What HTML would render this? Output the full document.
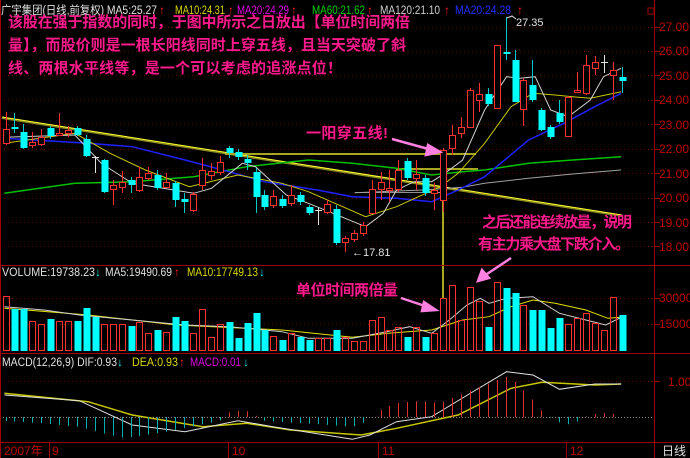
<!DOCTYPE html>
<html><head><meta charset="utf-8"><style>
html,body{margin:0;padding:0;background:#000;width:690px;height:458px;overflow:hidden}
svg{display:block}
text{font-family:"Liberation Sans","Noto Sans CJK SC",sans-serif}
.p{font-family:"Liberation Sans","WenQuanYi Zen Hei","Noto Sans CJK SC",sans-serif;fill:#ff1a8c;font-weight:bold}
</style></head><body>
<svg id="s" width="690" height="458" viewBox="0 0 690 458" xmlns="http://www.w3.org/2000/svg">
<rect width="690" height="458" fill="#000"/>
<g id="grid"></g>
<g id="lines"></g>
<g id="cand"></g>
<g id="over"></g>
<g stroke="#a00000" stroke-width="1" fill="none">
<line x1="0" y1="265.5" x2="690" y2="265.5"/>
<line x1="0" y1="353.5" x2="690" y2="353.5"/>
<line x1="0" y1="442.5" x2="690" y2="442.5"/>
<line x1="654.5" y1="0" x2="654.5" y2="458"/>
<line x1="0.5" y1="0" x2="0.5" y2="458"/>
<rect x="648" y="8" width="6" height="6" stroke="#a00000"/>
</g>
<g font-size="11.5" lengthAdjust="spacingAndGlyphs">
<text x="1" y="14" fill="#e0e0e0" textLength="156" lengthAdjust="spacingAndGlyphs">广宇集团(日线,前复权) MA5:25.27</text>
<text x="175" y="14" fill="#d8d800" textLength="50" lengthAdjust="spacingAndGlyphs">MA10:24.31</text>
<text x="237" y="14" fill="#e000e0" textLength="52" lengthAdjust="spacingAndGlyphs">MA20:24.29</text>
<text x="312" y="14" fill="#00d000" textLength="53" lengthAdjust="spacingAndGlyphs">MA60:21.62</text>
<text x="380" y="14" fill="#d0d0d0" textLength="60" lengthAdjust="spacingAndGlyphs">MA120:21.10</text>
<text x="455" y="14" fill="#2030ff" textLength="56" lengthAdjust="spacingAndGlyphs">MA20:24.28</text>
<text x="2" y="276" fill="#e0e0e0" textLength="93" lengthAdjust="spacingAndGlyphs">VOLUME:19738.23</text>
<text x="105" y="276" fill="#e0e0e0" textLength="67" lengthAdjust="spacingAndGlyphs">MA5:19490.69</text>
<text x="187" y="276" fill="#d8d800" textLength="71" lengthAdjust="spacingAndGlyphs">MA10:17749.13</text>
<text x="2" y="366" fill="#e0e0e0" textLength="115" lengthAdjust="spacingAndGlyphs">MACD(12,26,9) DIF:0.93</text>
<text x="132" y="366" fill="#d8d800" textLength="46" lengthAdjust="spacingAndGlyphs">DEA:0.93</text>
<text x="190" y="366" fill="#e000e0" textLength="51" lengthAdjust="spacingAndGlyphs">MACD:0.01</text>
</g>
<g font-size="12" fill="#ff2020">
<text x="159" y="14">↑</text><text x="228" y="14">↑</text><text x="291" y="14">↑</text><text x="367" y="14">↑</text><text x="444" y="14">↑</text><text x="517" y="14">↑</text>
<text x="174" y="276">↑</text>
<text x="179" y="366">↑</text>
</g>
<g font-size="12" fill="#00e0e0">
<text x="95" y="276">↓</text><text x="259" y="276">↓</text><text x="117" y="366">↓</text><text x="243" y="366">↓</text>
</g>
<g font-size="12" fill="#c00000">
<text x="659" y="31">27.00</text><text x="659" y="55">26.00</text><text x="659" y="80">25.00</text>
<text x="659" y="104">24.00</text><text x="659" y="129">23.00</text><text x="659" y="153">22.00</text>
<text x="659" y="178">21.00</text><text x="659" y="202">20.00</text><text x="659" y="227">19.00</text>
<text x="659" y="251">18.00</text>
<text x="659" y="302">30000</text><text x="659" y="328">15000</text>
<text x="668" y="386">1.00</text>
<text x="4" y="455">2007年</text><text x="52" y="455">9</text><text x="232" y="455">10</text><text x="382" y="455">11</text><text x="570" y="455">12</text>
</g>
<g stroke="#a00000"><line x1="49.5" y1="443" x2="49.5" y2="458"/><line x1="228.5" y1="443" x2="228.5" y2="458"/><line x1="378.5" y1="443" x2="378.5" y2="458"/><line x1="566.5" y1="443" x2="566.5" y2="458"/></g>
<text x="662" y="455" font-size="12" fill="#e0e0e0">日线</text>
<text x="516" y="26" font-size="11" fill="#e0e0e0">27.35</text>
<text x="352" y="256" font-size="11" fill="#e0e0e0">←17.81</text>
<g class="p" font-size="15">
<text x="8" y="27" class="p" textLength="402">该股在强于指数的同时，于图中所示之日放出【单位时间两倍</text>
<text x="8" y="50" class="p" textLength="398">量】，而股价则是一根长阳线同时上穿五线，且当天突破了斜</text>
<text x="8" y="73" class="p" textLength="334">线、两根水平线等，是一个可以考虑的追涨点位！</text>
<text x="306" y="138" class="p" textLength="82">一阳穿五线!</text>
<text x="482" y="227" class="p" textLength="150">之后还能连续放量，说明</text>
<text x="478" y="249" class="p" textLength="152">有主力乘大盘下跌介入。</text>
<text x="296" y="295" class="p" textLength="102">单位时间两倍量</text>
</g>
<g stroke="#ff80e0" stroke-width="2.5" fill="#ff80e0">
<line x1="392" y1="139" x2="432" y2="150"/><polygon points="440,152 428,145 426,155"/>
<line x1="511" y1="258" x2="484" y2="276"/><polygon points="478,281 482,270 489,278"/>
<line x1="401" y1="298" x2="428" y2="307"/><polygon points="436,310 424,302 422,311"/>
</g>
</svg>
<script>
var NS="http://www.w3.org/2000/svg";
function el(p,t,a){var e=document.createElementNS(NS,t);for(var k in a)e.setAttribute(k,a[k]);document.getElementById(p).appendChild(e);return e;}
[27,51,75,100,124,149,173,198,222,246,298,324,381].forEach(function(y){el("grid","line",{x1:0,x2:654,y1:y+.5,y2:y+.5,stroke:"#600000","stroke-dasharray":"1,3"});el("grid","line",{x1:654,x2:660,y1:y+.5,y2:y+.5,stroke:"#a00000"});});
el("grid","line",{x1:0,x2:654,y1:417.5,y2:417.5,stroke:"#888","stroke-dasharray":"1,2"});
function pl(pts,sx,sy,oy,col,w){var s=pts.map(function(p){return (p[0]/sx).toFixed(1)+","+(oy+p[1]/sy).toFixed(1)}).join(" ");el("lines","polyline",{points:s,fill:"none",stroke:col,"stroke-width":w||1});}
el("lines","line",{x1:2,y1:118,x2:622,y2:216,stroke:"#8a8a20","stroke-width":2});
el("lines","line",{x1:2,y1:117,x2:622,y2:215,stroke:"#ffff30","stroke-width":1});
el("lines","line",{x1:225,y1:154,x2:476,y2:154,stroke:"#a8a820","stroke-width":2});
el("lines","line",{x1:396,y1:169,x2:478,y2:169,stroke:"#a8a820","stroke-width":2});
el("lines","line",{x1:355,y1:192.5,x2:440,y2:192.5,stroke:"#909090","stroke-width":1});
el("lines","line",{x1:443,y1:200,x2:443,y2:298,stroke:"#a8a820","stroke-width":2});
var X=2.27;
pl([[805,578],[960,570],[1050,562],[1100,550],[1200,535],[1300,522],[1410,510]],X,3,0,"#a0a0a0");
pl([[10,580],[170,550],[300,545],[440,530],[560,500],[700,480],[800,490],[900,505],[980,525],[1050,515],[1100,510],[1200,490],[1300,480],[1410,470]],X,3,0,"#00c000",1.5);
pl([[10,415],[200,430],[300,440],[420,480],[520,515],[600,545],[720,570],[800,590],[900,595],[980,605],[1040,570],[1100,530],[1200,420],[1280,370],[1350,320],[1410,280]],X,3,0,"#2020ff",1.5);
pl([[10,430],[170,400],[250,460],[330,510],[430,560],[540,525],[580,535],[640,550],[700,575],[830,650],[900,620],[1000,560],[1040,520],[1100,430],[1160,320],[1210,280],[1260,285],[1300,290],[1340,295],[1410,275]],X,3,0,"#c8c800");
pl([[10,412],[170,405],[230,490],[300,550],[440,580],[480,565],[550,490],[580,500],[650,585],[700,610],[830,680],[870,640],[900,570],[940,545],[980,545],[1010,520],[1050,480],[1100,330],[1150,230],[1180,235],[1215,230],[1250,330],[1290,350],[1340,300],[1370,230],[1410,205]],X,3,0,"#d0d0d0");
var C=[["r",129,143,112,145],["c",127,129,113,133],["c",132,148,124,149],["r",142,145,132,148],["r",137,144,129,146],["c",128,136,126,139],["r",133,135,113,135],["r",130,133,126,137],["c",128,135,126,136],["c",139,156,135,157],["w",157,157,156,173],["c",160,192,159,193],["r",185,189,180,205],["r",182,187,171,193],["c",180,185,177,193],["r",177,190,167,192],["r",173,178,167,180],["c",175,188,170,190],["r",182,187,173,188],["c",183,200,181,207],["c",199,202,193,213],["r",194,210,192,212],["r",170,185,158,190],["r",171,175,163,180],["r",162,172,156,175],["c",148,153,146,158],["c",152,157,149,160],["c",159,163,155,170],["c",172,197,168,213],["c",195,207,190,210],["r",196,205,190,208],["c",199,206,195,208],["r",195,203,185,206],["c",195,202,192,205],["c",207,213,205,215],["w",210,210,208,225],["r",204,212,200,214],["c",209,243,205,245],["r",238,242,236,252],["r",233,239,230,242],["r",225,233,222,236],["r",189,213,180,214],["r",182,189,172,200],["r",188,190,170,202],["r",170,189,160,192],["c",161,178,158,180],["r",174,178,160,190],["c",178,193,175,196],["r",190,193,183,210],["r",150,200,148,212],["r",135,148,125,155],["r",127,133,117,138],["r",90,127,88,128],["r",94,100,83,112],["c",94,104,88,106],["r",45,108,45,108],["c",52,54,17,60],["c",60,102,50,102],["r",80,109,78,126],["c",85,100,60,102],["c",110,130,108,131],["c",127,137,125,139],["c",113,122,100,124],["r",97,136,96,137],["r",90,92,72,93],["r",65,93,55,95],["r",62,68,56,75],["w",62,62,55,73],["r",70,75,62,100],["c",77,81,67,93]];
var V=[[296,"r"],[309,"c"],[309,"c"],[321,"r"],[324,"r"],[319,"c"],[321,"r"],[321,"r"],[321,"c"],[308,"c"],[317,"c"],[324,"r"],[324,"r"],[324,"r"],[326,"c"],[322,"r"],[333,"r"],[330,"c"],[332,"r"],[317,"c"],[321,"c"],[333,"r"],[309,"r"],[337,"r"],[324,"r"],[322,"c"],[338,"c"],[323,"c"],[313,"c"],[330,"c"],[336,"r"],[340,"c"],[333,"r"],[337,"c"],[340,"c"],[338,"r"],[338,"r"],[330,"c"],[337,"r"],[341,"r"],[341,"r"],[320,"r"],[317,"r"],[330,"r"],[327,"r"],[337,"c"],[327,"r"],[337,"c"],[333,"r"],[298,"r"],[285,"r"],[320,"r"],[287,"r"],[301,"r"],[327,"c"],[282,"r"],[288,"c"],[293,"c"],[305,"r"],[310,"c"],[310,"c"],[328,"c"],[318,"c"],[324,"r"],[318,"r"],[313,"r"],[323,"r"],[330,"r"],[297,"r"],[315,"c"]];
var RED="#ff3030",CY="#00ffff";
C.forEach(function(c,i){var x=Math.round(5.5+i*8.93);
 var col=c[0]=="r"?RED:(c[0]=="c"?CY:"#e0e0e0");
 var wc=c[0]=="c"?"#00c8c8":col;
 el("cand","line",{x1:x+.5,x2:x+.5,y1:c[3],y2:c[4],stroke:wc});
 if(c[0]=="r"){el("cand","rect",{x:x-2.5,y:c[1]+.5,width:6,height:Math.max(c[2]-c[1],1),fill:"#000",stroke:RED});}
 else if(c[0]=="c"){el("cand","rect",{x:x-2.5,y:c[1],width:7,height:Math.max(c[2]-c[1],2),fill:CY});}
 else{el("cand","line",{x1:x-3,x2:x+4,y1:c[1]+.5,y2:c[1]+.5,stroke:"#e0e0e0"});}
 var v=V[i];
 if(v[1]=="r")el("cand","rect",{x:x-2.5,y:v[0]+.5,width:6,height:350-v[0],fill:"none",stroke:RED});
 else el("cand","rect",{x:x-2.5,y:v[0],width:7,height:351-v[0],fill:CY});
});
pl([[10,235],[200,255],[400,285],[640,300],[800,322],[880,310],[980,300],[1050,270],[1110,260],[1160,230],[1210,210],[1260,220],[1330,240],[1380,265],[1410,262]],X,3,230,"#e0e000");
pl([[10,230],[100,240],[180,255],[300,270],[420,285],[520,290],[640,305],[700,325],[800,325],[860,310],[930,290],[980,310],[1020,270],[1060,225],[1090,205],[1110,220],[1150,205],[1210,200],[1270,250],[1330,270],[1375,285],[1410,262]],X,3,230,"#d0d0d0");
function hv(x){
 var pts=[[5,-4],[40,-6],[80,-10],[110,-18],[125,-21],[140,-19],[170,-14],[200,-8],[222,-3],[230,5],[245,7],[255,2],[265,-4],[300,-6],[330,-8],[352,-10],[368,-4],[378,5],[395,14],[420,16],[440,14],[460,22],[480,30],[500,38],[510,41],[520,30],[535,15],[545,2],[555,-3],[565,-8],[575,-6],[585,0],[595,3],[605,4],[615,3],[622,1]];
 for(var k=0;k<pts.length-1;k++){if(x<=pts[k+1][0]){var a=pts[k],b=pts[k+1];return a[1]+(b[1]-a[1])*(x-a[0])/(b[0]-a[0]);}}return 0;}
for(var i=0;i<70;i++){var x=Math.round(5.5+i*8.93)+.5;var h=hv(x);
 el("cand","line",{x1:x,x2:x,y1:417,y2:417-h,stroke:h>0?"#e03030":"#00b0b0"});}
pl([[10,490],[200,515],[300,555],[460,590],[560,580],[660,600],[820,615],[900,595],[1040,555],[1160,475],[1230,457],[1350,465],[1410,462]],X,3,230,"#c8c800",1.5);
pl([[10,495],[180,512],[300,585],[420,605],[540,572],[620,590],[800,628],[840,615],[900,575],[980,560],[1080,480],[1150,425],[1210,435],[1270,478],[1350,462],[1410,462]],X,3,230,"#e0e0e0");
el("cand","polyline",{points:"507,18 512,16 516,19",fill:"none",stroke:"#e0e0e0"});
</script>
</body></html>
